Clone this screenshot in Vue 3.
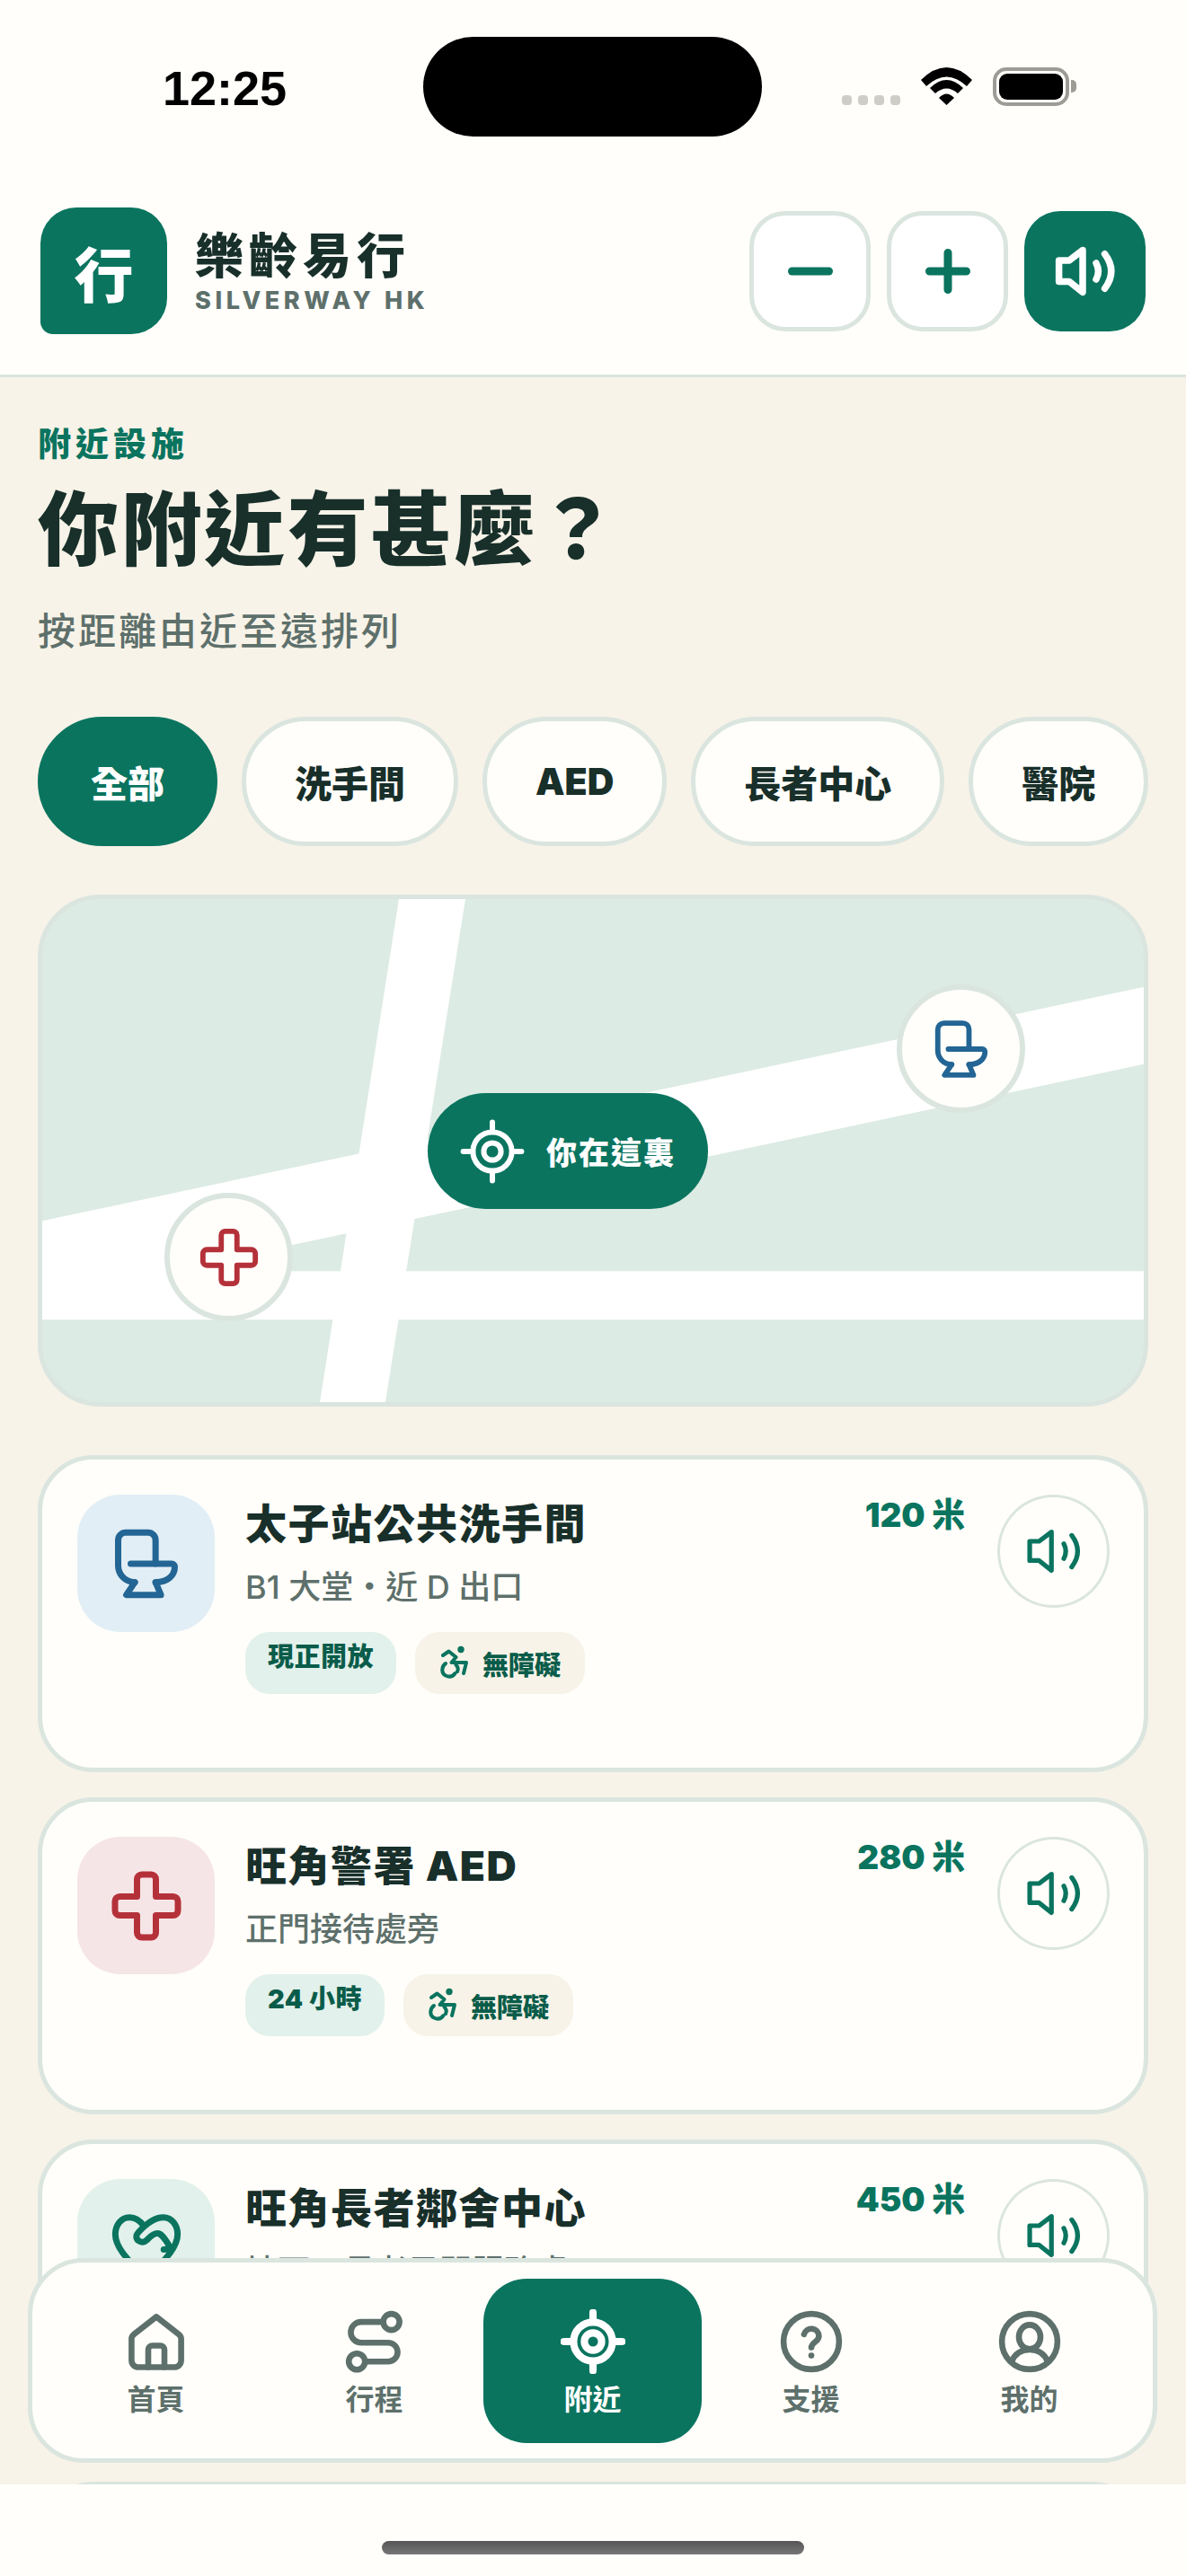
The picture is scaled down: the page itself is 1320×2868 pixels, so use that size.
<template>
  <div class="phone">
    <div class="status">
      <span class="time">12:25</span>
      <div class="island"></div>
      <div class="status-icons">
        <div class="signal"><i v-for="n in 4" :key="n"></i></div>
        <svg class="wifi" width="57" height="42" viewBox="0 0 57 42">
          <path d="M0 14Q28.5-14 57 14L51 21Q28.5 0 6 21Z" />
          <path d="M10 23Q28.5 5 47 23L41 29Q28.5 18 16 29Z" />
          <path d="M20 34Q28.5 25 37 34L28.5 42Z" />
        </svg>
        <div class="battery"><div class="battery-fill"></div></div>
        <div class="battery-cap"></div>
      </div>
    </div>

    <header class="header">
      <div class="logo">行</div>
      <div class="brand">
        <div class="brand-name">樂齡易行</div>
        <div class="brand-sub">SILVERWAY HK</div>
      </div>
      <div class="header-actions">
        <button class="square-btn">
          <svg width="60" height="60" viewBox="0 0 60 60"><path class="bar" d="M9.500 30H50.500" /></svg>
        </button>
        <button class="square-btn">
          <svg width="60" height="60" viewBox="0 0 60 60"><path class="bar" d="M9.500 30H50.500M30 9.500V50.500" /></svg>
        </button>
        <button class="square-btn solid">
          <svg class="icon speak-lg" viewBox="0 0 24 24"><path v-for="d in icons.speaker" :key="d" :d="d" /></svg>
        </button>
      </div>
    </header>

    <main class="content">
      <div class="kicker">附近設施</div>
      <h1 class="title">你附近有甚麼？</h1>
      <p class="lead">按距離由近至遠排列</p>

      <div class="chips">
        <button
          v-for="f in filters"
          :key="f"
          class="chip"
          :class="{ active: f === activeFilter }"
          @click="activeFilter = f"
        >{{ f }}</button>
      </div>

      <section class="map">
        <svg class="roads" viewBox="0 0 1226 561" preserveAspectRatio="none">
          <path d="M397 0H471L382 561H309Z" />
          <path d="M0 359L1226 98V184L0 445Z" />
          <path d="M0 415H1226V469H0Z" />
        </svg>
        <div class="pin pin-wc">
          <svg class="icon pin-icon blue" viewBox="0 0 24 24"><path v-for="d in icons.toilet" :key="d" :d="d" /></svg>
        </div>
        <div class="pin pin-aed">
          <svg class="icon pin-icon red" viewBox="0 0 24 24"><path v-for="d in icons.cross" :key="d" :d="d" /></svg>
        </div>
        <div class="here">
          <svg class="icon here-icon" viewBox="0 0 24 24"><path v-for="d in icons.target" :key="d" :d="d" /></svg>
          <span>你在這裏</span>
        </div>
      </section>

      <article v-for="p in places" :key="p.name" class="card">
        <div class="tile" :class="p.tone">
          <svg class="icon tile-icon" viewBox="0 0 24 24"><path v-for="d in icons[p.icon]" :key="d" :d="d" /></svg>
        </div>
        <div class="card-body">
          <h2 class="card-title">{{ p.name }}</h2>
          <div class="card-sub">{{ p.where }}</div>
          <div class="tags">
            <span class="tag tag-open">{{ p.tag }}</span>
            <span class="tag tag-access">
              <svg class="wheel" width="36" height="40" viewBox="0 0 36 40">
                <circle cx="26" cy="4.500" r="3.700" />
                <path d="M6 11L12.500 6.500L20.500 13L15.500 19H32L29 31M9 20C4 23.500 4 31 9 33.500C13 35.500 17 34.500 19.500 31M20.500 21.500C23 24 23 27 22 29" />
              </svg>
              無障礙
            </span>
          </div>
        </div>
        <div class="dist">{{ p.dist }}</div>
        <button class="speak">
          <svg class="icon speak-sm" viewBox="0 0 24 24"><path v-for="d in icons.speaker" :key="d" :d="d" /></svg>
        </button>
      </article>
    </main>

    <nav class="nav">
      <div v-for="n in tabs" :key="n.label" class="tab" :class="{ active: n.label === '附近' }">
        <svg class="icon tab-icon" viewBox="0 0 24 24"><path v-for="d in icons[n.icon]" :key="d" :d="d" /></svg>
        <span>{{ n.label }}</span>
      </div>
    </nav>

    <div class="home-bar"><div class="home-pill"></div></div>
  </div>
</template>

<script setup>
import { ref } from 'vue'

const activeFilter = ref('全部')
const filters = ['全部', '洗手間', 'AED', '長者中心', '醫院']

const icons = {
  speaker: [
    'M11 4.200L6 8H2.200V15.800H6L11 19.800Z',
    'M16 9Q17.600 12 16 15',
    'M19.200 5.600Q24 12 19.200 18.400'
  ],
  toilet: [
    'M8.300 17.900C5 17.700 3 15.300 3 12.500V4.500A2.400 2.400 0 0 1 5.400 2.100H12.500A2.400 2.400 0 0 1 14.900 4.500V12',
    'M7 12H20A1 1 0 0 1 21 13C21 15.800 18.600 17.900 14.900 17.900',
    'M8.300 17.900L5.600 21.900H16.600L14.900 17.900'
  ],
  cross: [
    'M9 3.500A1.500 1.500 0 0 1 10.500 2H13.500A1.500 1.500 0 0 1 15 3.500V9H20.500A1.500 1.500 0 0 1 22 10.500V13.500A1.500 1.500 0 0 1 20.500 15H15V20.500A1.500 1.500 0 0 1 13.500 22H10.500A1.500 1.500 0 0 1 9 20.500V15H3.500A1.500 1.500 0 0 1 2 13.500V10.500A1.500 1.500 0 0 1 3.500 9H9Z'
  ],
  heart: [
    'M11.200 5C9.800 3 8 2.200 6.600 2.200C4 2.200 2.100 4.600 2.100 7.600C2.100 12 7 17 12 21C17 17 21.900 12 21.900 7.600C21.900 4.600 20 2.200 17.400 2.200C15 2.200 12.500 3.500 9.400 7C8.600 7.900 8.600 8.900 9.400 9.600C10.300 10.300 11.300 10.200 12 9.500C13 8.600 14 7.300 15.500 7.300C16.600 7.300 17.500 8.500 19 10.800C19.500 11.600 19 12.400 17.500 12.400'
  ],
  target: [
    'M19.200 12A7.200 7.200 0 1 1 4.800 12A7.200 7.200 0 1 1 19.200 12Z',
    'M15.200 12A3.200 3.200 0 1 1 8.800 12A3.200 3.200 0 1 1 15.200 12Z',
    'M12 1.200V4.500M12 19.500V22.800M1.200 12H4.500M19.500 12H22.800'
  ],
  home: [
    'M12 2.800L20.300 9.300Q21.200 10 21.200 11V19A2.500 2.500 0 0 1 18.700 21.500H5.300A2.500 2.500 0 0 1 2.800 19V11Q2.800 10 3.700 9.300Z',
    'M9 21.500V15A1.500 1.500 0 0 1 10.500 13.500H13.500A1.500 1.500 0 0 1 15 15V21.500'
  ],
  route: [
    'M21.200 4.700A3 3 0 1 1 15.200 4.700A3 3 0 1 1 21.200 4.700Z',
    'M8.400 19.400A3 3 0 1 1 2.400 19.400A3 3 0 1 1 8.400 19.400Z',
    'M15.200 4.700H7A3.850 3.850 0 0 0 7 12.400H17A3.500 3.500 0 0 1 17 19.400H8.400'
  ],
  help: [
    'M22.300 12A10.300 10.300 0 1 1 1.700 12A10.300 10.300 0 1 1 22.300 12Z',
    'M9.300 9.300A2.800 2.800 0 0 1 14.800 10C14.800 12 12 12.300 12 14.200',
    'M12 17.200H12.010'
  ],
  user: [
    'M22.300 12A10.300 10.300 0 1 1 1.700 12A10.300 10.300 0 1 1 22.300 12Z',
    'M16 10.300A4 4.500 0 1 1 8 10.300A4 4.500 0 1 1 16 10.300Z',
    'M5.300 19.500C6.500 16.500 9 15 12 15S17.500 16.500 18.700 19.500'
  ]
}

const places = [
  { name: '太子站公共洗手間', where: 'B1 大堂・近 D 出口', tag: '現正開放', dist: '120 米', icon: 'toilet', tone: 'blue' },
  { name: '旺角警署 AED', where: '正門接待處旁', tag: '24 小時', dist: '280 米', icon: 'cross', tone: 'red' },
  { name: '旺角長者鄰舍中心', where: '地下・長者日間服務處', tag: '現正開放', dist: '450 米', icon: 'heart', tone: 'green' },
  { name: '廣華醫院', where: '急症室入口', tag: '24 小時', dist: '800 米', icon: 'cross', tone: 'red' }
]

const tabs = [
  { label: '首頁', icon: 'home' },
  { label: '行程', icon: 'route' },
  { label: '附近', icon: 'target' },
  { label: '支援', icon: 'help' },
  { label: '我的', icon: 'user' }
]
</script>

<style>
html, body {
  margin: 0;
  background: #f7f3e8;
}
</style>

<style scoped>
.phone {
  position: relative;
  width: 1320px;
  height: 2868px;
  display: flex;
  flex-direction: column;
  overflow: hidden;
  background: #f7f3e8;
  color: #182f2a;
  font-family: Inter, "Noto Sans CJK TC", sans-serif;
}

.icon {
  display: block;
  fill: none;
  stroke: currentColor;
  stroke-width: 2.2;
  stroke-linecap: round;
  stroke-linejoin: round;
}

/* status bar */
.status {
  flex: none;
  height: 186px;
  box-sizing: border-box;
  padding: 41px 0 0 181px;
  display: flex;
  align-items: flex-start;
  background: #fffefa;
}

.time {
  width: 290px;
  margin-top: 31px;
  font: 700 54px/52px "Liberation Sans", sans-serif;
  color: #000;
}

.island {
  width: 377px;
  height: 111px;
  border-radius: 56px;
  background: #000;
}

.status-icons {
  margin: 34px 0 0 89px;
  display: flex;
  align-items: flex-end;
}

.signal {
  display: flex;
  gap: 7px;
  margin-right: 23px;
  height: 11px;
  margin-bottom: 1px;
}

.signal i {
  width: 11px;
  height: 11px;
  border-radius: 4px;
  background: #cfcdc8;
}

.wifi {
  display: block;
  margin-right: 23px;
  margin-bottom: 1px;
}

.battery {
  box-sizing: border-box;
  width: 85px;
  height: 43px;
  padding: 3px;
  border: 4px solid #9c9b96;
  border-radius: 15px;
}

.battery-fill {
  height: 100%;
  border-radius: 9px;
  background: #000;
}

.battery-cap {
  width: 6px;
  height: 14px;
  margin: 0 0 15px 2px;
  border-radius: 0 5px 5px 0;
  background: #9c9b96;
}

/* header */
.header {
  flex: none;
  height: 234px;
  box-sizing: border-box;
  padding: 0 45px;
  display: flex;
  align-items: center;
  background: #fffefa;
  border-bottom: 3px solid #dbe5e0;
}

.logo {
  width: 141px;
  height: 141px;
  border-radius: 40px 40px 40px 14px;
  background: #0a745f;
  color: #fff;
  display: flex;
  align-items: center;
  justify-content: center;
  font-size: 66px;
  font-weight: 900;
}

.brand {
  margin-left: 31px;
}

.brand-name {
  font-size: 54px;
  line-height: 66px;
  font-weight: 900;
  letter-spacing: 6px;
}

.brand-sub {
  margin-top: 1px;
  font-size: 27px;
  line-height: 30px;
  font-weight: 800;
  letter-spacing: 4.600px;
  color: #5e706b;
}

.header-actions {
  margin-left: auto;
  display: flex;
  gap: 18px;
}

.square-btn {
  width: 135px;
  height: 134px;
  box-sizing: border-box;
  padding: 0;
  border: 5px solid #dbe5e0;
  border-radius: 40px;
  background: #fff;
  color: #0a745f;
  display: flex;
  align-items: center;
  justify-content: center;
}

.square-btn.solid {
  border: none;
  background: #0a745f;
  color: #fff;
}

.bar {
  fill: none;
  stroke: #0a745f;
  stroke-width: 9;
  stroke-linecap: round;
}

.speak-lg {
  width: 72px;
  height: 72px;
  stroke-width: 2.500;
}

/* main */
.content {
  flex: 1;
  min-height: 0;
  overflow: hidden;
  padding: 50px 42px 0;
}

.kicker {
  font-size: 37px;
  line-height: 50px;
  font-weight: 900;
  letter-spacing: 5px;
  color: #0a745f;
}

.title {
  margin: 15px 0 0;
  font-size: 90px;
  line-height: 110px;
  font-weight: 900;
  letter-spacing: 2.500px;
}

.lead {
  margin: 28px 0 0;
  font-size: 42px;
  line-height: 60px;
  font-weight: 500;
  letter-spacing: 3px;
  color: #5e706b;
}

.chips {
  margin-top: 65px;
  display: flex;
  gap: 27px;
}

.chip {
  flex: none;
  height: 144px;
  box-sizing: border-box;
  padding: 0 54px;
  border: 5px solid #dbe5e0;
  border-radius: 72px;
  background: #fffefa;
  color: #182f2a;
  font-family: inherit;
  font-size: 41px;
  font-weight: 900;
  white-space: nowrap;
}

.chip.active {
  border-color: #0a745f;
  background: #0a745f;
  color: #fff;
}

/* map */
.map {
  position: relative;
  height: 570px;
  box-sizing: border-box;
  margin-top: 54px;
  width: 1236px;
  border: 5px solid #dbe5e0;
  border-radius: 70px;
  background: #dcebe3;
  overflow: hidden;
}

.roads {
  position: absolute;
  inset: 0;
  width: 100%;
  height: 100%;
  fill: #fff;
}

.pin {
  position: absolute;
  width: 143px;
  height: 143px;
  box-sizing: border-box;
  border: 6px solid #dbe5e0;
  border-radius: 50%;
  background: #fffefa;
  display: flex;
  align-items: center;
  justify-content: center;
}

.pin-wc {
  left: 951px;
  top: 95px;
}

.pin-aed {
  left: 136px;
  top: 327px;
}

.pin-icon {
  width: 70px;
  height: 70px;
  stroke-width: 2;
}

.blue {
  color: #236594;
}

.red {
  color: #b5313a;
}

.here {
  position: absolute;
  left: 429px;
  top: 216px;
  width: 312px;
  height: 129px;
  box-sizing: border-box;
  padding-left: 36px;
  border-radius: 65px;
  background: #0a745f;
  color: #fff;
  display: flex;
  align-items: center;
  gap: 24px;
  font-size: 34px;
  font-weight: 900;
  letter-spacing: 2px;
}

.here-icon {
  width: 72px;
  height: 72px;
  stroke-width: 2;
}

/* cards */
.card {
  width: 1236px;
  height: 353px;
  box-sizing: border-box;
  margin-top: 28px;
  padding: 39px 38px 0 39px;
  display: flex;
  align-items: flex-start;
  border: 5px solid #dbe5e0;
  border-radius: 62px;
  background: #fffefa;
}

.map + .card {
  margin-top: 54px;
}

.tile {
  flex: none;
  width: 153px;
  height: 153px;
  border-radius: 48px;
  display: flex;
  align-items: center;
  justify-content: center;
}

.tile.blue {
  background: #e1eef6;
}

.tile.red {
  background: #f6e5e6;
}

.tile.green {
  background: #e2f1eb;
  color: #0a745f;
}

.tile-icon {
  width: 84px;
  height: 84px;
  stroke-width: 2;
}

.card-body {
  flex: 1;
  min-width: 0;
  margin-left: 34px;
}

.card-title {
  margin: 0;
  font-size: 46px;
  line-height: 64px;
  font-weight: 900;
  letter-spacing: 1.500px;
}

.card-sub {
  margin-top: 14px;
  font-size: 36px;
  line-height: 50px;
  font-weight: 500;
  color: #5e706b;
}

.tags {
  margin-top: 25px;
  display: flex;
  gap: 21px;
}

.tag {
  height: 69px;
  box-sizing: border-box;
  border-radius: 27px;
  font-size: 29px;
  font-weight: 900;
  color: #0a5c4a;
}

.tag-open {
  padding: 7px 25px 0;
  line-height: 42px;
  letter-spacing: 0.500px;
  background: #e2f1eb;
}

.tag-access {
  padding: 0 27px 0 25px;
  display: flex;
  align-items: center;
  gap: 14px;
  background: #f7f3e8;
}

.wheel {
  display: block;
  fill: none;
  stroke: #0a745f;
  stroke-width: 4;
  stroke-linecap: round;
  stroke-linejoin: round;
}

.wheel circle {
  fill: #0a745f;
  stroke: none;
}

.dist {
  flex: none;
  font-size: 37px;
  line-height: 46px;
  font-weight: 900;
  color: #0a745f;
}

.speak {
  flex: none;
  width: 125px;
  height: 126px;
  box-sizing: border-box;
  margin-left: 36px;
  padding: 0;
  border: 3px solid #dbe5e0;
  border-radius: 50%;
  background: #fffefa;
  color: #0a745f;
  display: flex;
  align-items: center;
  justify-content: center;
}

.speak-sm {
  width: 66px;
  height: 66px;
  stroke-width: 1.900;
}

/* bottom nav, floats over the list */
.nav {
  position: absolute;
  left: 31px;
  top: 2514px;
  width: 1257px;
  height: 228px;
  box-sizing: border-box;
  padding: 18px 16px;
  display: grid;
  grid-template-columns: repeat(5, 243px);
  border: 5px solid #dbe5e0;
  border-radius: 62px;
  background: #fffefa;
}

.tab {
  height: 183px;
  box-sizing: border-box;
  padding-top: 34px;
  border-radius: 48px;
  display: flex;
  flex-direction: column;
  align-items: center;
  gap: 9px;
  color: #5e706b;
  font-size: 32px;
  line-height: 40px;
  font-weight: 700;
}

.tab.active {
  background: #0a745f;
  color: #fff;
}

.tab-icon {
  width: 72px;
  height: 72px;
}

.tab.active .tab-icon {
  stroke-width: 2.700;
}

.home-bar {
  flex: none;
  height: 102px;
  position: relative;
  z-index: 1;
  display: flex;
  justify-content: center;
  padding-top: 63px;
  box-sizing: border-box;
  background: #fffefa;
}

.home-pill {
  width: 470px;
  height: 15px;
  border-radius: 8px;
  background: linear-gradient(#555, #777);
}
</style>
